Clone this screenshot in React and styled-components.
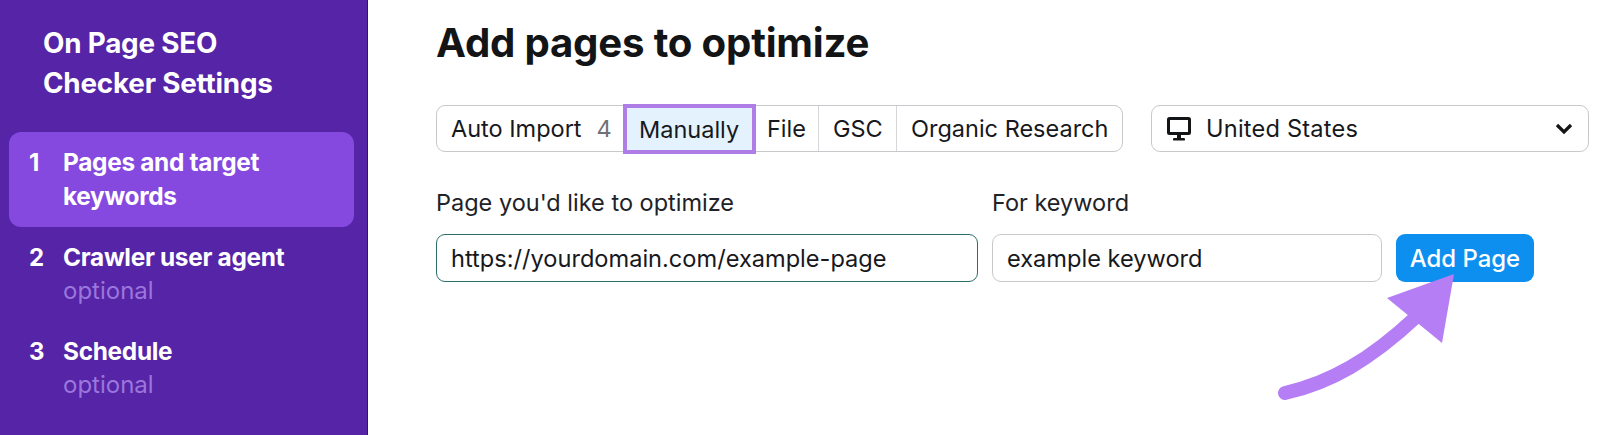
import React from "react";
import styled, { createGlobalStyle } from "styled-components";

const Global = createGlobalStyle`
  html, body { margin: 0; padding: 0; background: #fff; }
  body { font-family: Inter, "Liberation Sans", sans-serif; color: #17181c; overflow: hidden; }
  * { box-sizing: border-box; }
`;

const Page = styled.div`
  position: relative;
  display: flex;
  width: 1600px;
  height: 435px;
  overflow: hidden;
`;

const Sidebar = styled.aside`
  width: 368px;
  flex: none;
  background: #5524a7;
  border-right: 1px solid #2d1a5c;
  padding: 23px 14px 0 9px;
  color: #fff;
`;

const SideTitle = styled.h2`
  margin: 0 0 29px 34px;
  font-size: 27.8px;
  line-height: 40px;
  font-weight: 700;
  letter-spacing: -0.2px;
`;

const Step = styled.div`
  display: flex;
  width: 345px;
  height: ${(p) => (p.$active ? "95px" : "94px")};
  padding: 14px 0 0 20px;
  border-radius: 12px;
  background: ${(p) => (p.$active ? "#8549e0" : "transparent")};
`;

const StepNum = styled.span`
  width: 34px;
  flex: none;
  font-size: 24px;
  line-height: 33px;
  font-weight: 700;
`;

const StepText = styled.div`
  font-size: 24.4px;
  line-height: 33.5px;
  font-weight: 700;
  letter-spacing: -0.3px;
`;

const StepHint = styled.div`
  margin-top: -1px;
  font-size: 24px;
  font-weight: 400;
  letter-spacing: 0;
  color: #9b76dc;
`;

const Main = styled.main`
  flex: 1;
  padding: 18px 0 0 68px;
`;

const Heading = styled.h1`
  margin: 0 0 37px;
  font-size: 40.2px;
  line-height: 50px;
  font-weight: 700;
  letter-spacing: -0.2px;
  color: #131416;
`;

const Toolbar = styled.div`
  display: flex;
  gap: 28px;
  margin-bottom: 36px;
`;

const Tabs = styled.div`
  display: flex;
  width: 687px;
  height: 47px;
  border: 1px solid #c7c9cd;
  border-radius: 9px;
`;

const Tab = styled.div`
  display: flex;
  align-items: center;
  flex: ${(p) => `0 0 ${p.$w}px`};
  padding-left: ${(p) => p.$pad}px;
  font-size: 23.5px;
  border-right: ${(p) => (p.$sep ? "1px solid #d5d6d9" : "none")};
`;

const ActiveTab = styled(Tab)`
  height: 50px;
  margin-top: -2px;
  background: #e3f2fc;
  border: 4px solid #ae7ee6;
  padding-left: 12px;
`;

const Count = styled.span`
  margin-left: 15px;
  color: #6f7278;
`;

const Select = styled.div`
  display: flex;
  align-items: center;
  width: 438px;
  height: 47px;
  padding: 0 14px 0 14px;
  border: 1px solid #c7c9cd;
  border-radius: 9px;
  font-size: 23.6px;
`;

const SelectLabel = styled.span`
  flex: 1;
  margin-left: 14px;
  letter-spacing: 0.2px;
`;

const FormRow = styled.div`
  display: flex;
  align-items: flex-end;
`;

const Field = styled.div`
  width: ${(p) => p.$w}px;
  margin-right: 14px;
`;

const Label = styled.div`
  font-size: 23.5px;
  line-height: 30px;
  margin-bottom: 16px;
  color: #212227;
`;

const Input = styled.div`
  display: flex;
  align-items: center;
  height: 48px;
  padding-left: 14px;
  font-size: 23.6px;
  border: 1px solid ${(p) => (p.$focus ? "#2a6f6a" : "#c7c9cd")};
  border-radius: 9px;
`;

const AddButton = styled.div`
  display: flex;
  align-items: center;
  justify-content: center;
  width: 138px;
  height: 48px;
  border-radius: 9px;
  background: #0d8ff0;
  color: #fff;
  font-size: 23.9px;
  font-weight: 500;
`;

const Arrow = styled.svg`
  position: absolute;
  left: 1270px;
  top: 265px;
`;

const MonitorIcon = () => (
  <svg width="26" height="26" viewBox="0 0 26 26" fill="none">
    <rect x="2.5" y="2.5" width="21" height="15" rx="1" stroke="#131416" strokeWidth="3" />
    <rect x="11" y="18" width="4" height="4" fill="#131416" />
    <rect x="7" y="22" width="12" height="2.6" rx="1.2" fill="#131416" />
  </svg>
);

const Chevron = () => (
  <svg width="20" height="14" viewBox="0 0 20 14" fill="none">
    <path d="M3 3l7 7 7-7" stroke="#131416" strokeWidth="3.2" />
  </svg>
);

export default function App() {
  return (
    <>
      <Global />
      <Page>
        <Sidebar>
          <SideTitle>
            On Page SEO
            <br />
            Checker Settings
          </SideTitle>
          <Step $active>
            <StepNum>1</StepNum>
            <StepText>
              Pages and target
              <br />
              keywords
            </StepText>
          </Step>
          <Step>
            <StepNum>2</StepNum>
            <StepText>
              Crawler user agent
              <StepHint>optional</StepHint>
            </StepText>
          </Step>
          <Step>
            <StepNum>3</StepNum>
            <StepText>
              Schedule
              <StepHint>optional</StepHint>
            </StepText>
          </Step>
        </Sidebar>
        <Main>
          <Heading>Add pages to optimize</Heading>
          <Toolbar>
            <Tabs>
              <Tab $w={186} $pad={14}>
                Auto Import<Count>4</Count>
              </Tab>
              <ActiveTab $w={133}>Manually</ActiveTab>
              <Tab $w={63} $pad={11} $sep>
                File
              </Tab>
              <Tab $w={78} $pad={14} $sep>
                GSC
              </Tab>
              <Tab $w={225} $pad={14}>
                Organic Research
              </Tab>
            </Tabs>
            <Select>
              <MonitorIcon />
              <SelectLabel>United States</SelectLabel>
              <Chevron />
            </Select>
          </Toolbar>
          <FormRow>
            <Field $w={542}>
              <Label>Page you'd like to optimize</Label>
              <Input $focus>https://yourdomain.com/example-page</Input>
            </Field>
            <Field $w={390}>
              <Label>For keyword</Label>
              <Input>example keyword</Input>
            </Field>
            <AddButton>Add Page</AddButton>
          </FormRow>
        </Main>
        <Arrow width="190" height="140" viewBox="0 0 190 140" fill="none">
          <path d="M15 128C60 118 100 95 146 52" stroke="#b57ef5" strokeWidth="14" strokeLinecap="round" />
          <path d="M184 9L117 33L172 78Z" fill="#b57ef5" />
        </Arrow>
      </Page>
    </>
  );
}
